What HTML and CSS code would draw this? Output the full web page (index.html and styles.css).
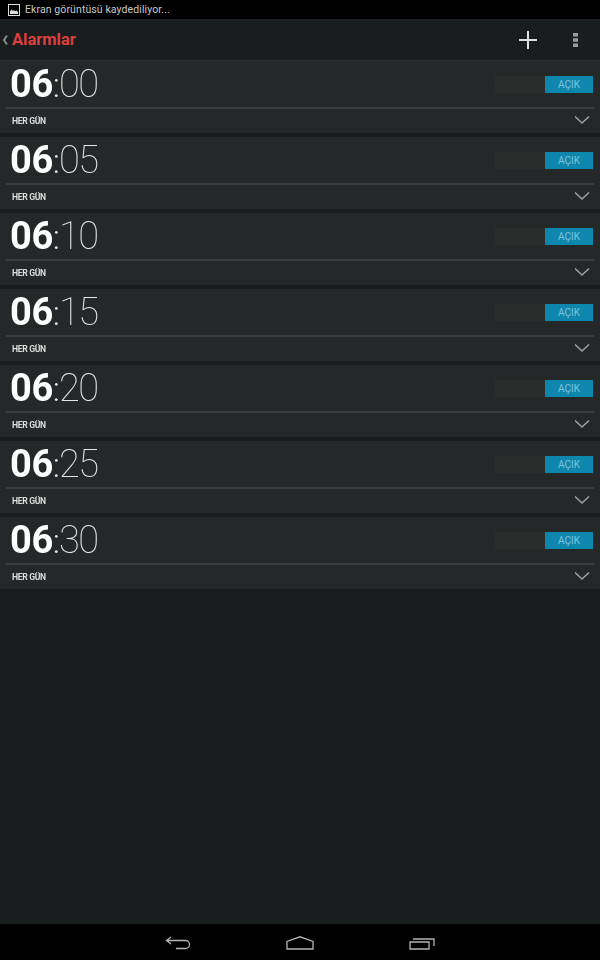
FILE: index.html
```html
<!DOCTYPE html>
<html lang="tr">
<head>
<meta charset="utf-8">
<title>Alarmlar</title>
<link rel="stylesheet" href="styles.css">
</head>
<body>
<div class="screen">
  <div class="status">
    <svg class="status-icon" width="12" height="12" viewBox="0 0 12 12"><rect x="0.5" y="0.5" width="11" height="11" fill="none" stroke="#ddd"/><path d="M2 10V7.500L3.500 5.500 5 7l1-1 1.200 1.200L8.500 6.500 10 8v2z" fill="#ddd"/></svg>
    <span class="status-text">Ekran görüntüsü kaydediliyor...</span>
  </div>
  <div class="actionbar">
    <svg class="back" width="6" height="12" viewBox="0 0 6 12"><path d="M5 1.500 2 6l3 4.500" fill="none" stroke="#8a8c8c" stroke-width="2"/></svg>
    <span class="title">Alarmlar</span>
    <svg class="add" width="20" height="20" viewBox="0 0 20 20"><path d="M10 1v18M1 10h18" stroke="#e0e0e0" stroke-width="2"/></svg>
    <svg class="more" width="5" height="16" viewBox="0 0 5 16"><path d="M0 1h5v3.500H0zM0 6.250h5v3.500H0zM0 11.500h5v3.500H0z" fill="#9c9c9c"/></svg>
  </div>
  <div class="list">
    <div class="card"><div class="top"><div class="time"><b>06</b><i>:</i><span>00</span></div><div class="toggle"><span class="on">AÇIK</span></div></div><div class="bottom"><span class="days">HER GÜN</span><svg class="chev" width="16" height="10" viewBox="0 0 16 10"><path d="M1 1.500 8 8l7-6.500" fill="none" stroke="#a0a0a0" stroke-width="1.600"/></svg></div></div>
    <div class="card"><div class="top"><div class="time"><b>06</b><i>:</i><span>05</span></div><div class="toggle"><span class="on">AÇIK</span></div></div><div class="bottom"><span class="days">HER GÜN</span><svg class="chev" width="16" height="10" viewBox="0 0 16 10"><path d="M1 1.500 8 8l7-6.500" fill="none" stroke="#a0a0a0" stroke-width="1.600"/></svg></div></div>
    <div class="card"><div class="top"><div class="time"><b>06</b><i>:</i><span>10</span></div><div class="toggle"><span class="on">AÇIK</span></div></div><div class="bottom"><span class="days">HER GÜN</span><svg class="chev" width="16" height="10" viewBox="0 0 16 10"><path d="M1 1.500 8 8l7-6.500" fill="none" stroke="#a0a0a0" stroke-width="1.600"/></svg></div></div>
    <div class="card"><div class="top"><div class="time"><b>06</b><i>:</i><span>15</span></div><div class="toggle"><span class="on">AÇIK</span></div></div><div class="bottom"><span class="days">HER GÜN</span><svg class="chev" width="16" height="10" viewBox="0 0 16 10"><path d="M1 1.500 8 8l7-6.500" fill="none" stroke="#a0a0a0" stroke-width="1.600"/></svg></div></div>
    <div class="card"><div class="top"><div class="time"><b>06</b><i>:</i><span>20</span></div><div class="toggle"><span class="on">AÇIK</span></div></div><div class="bottom"><span class="days">HER GÜN</span><svg class="chev" width="16" height="10" viewBox="0 0 16 10"><path d="M1 1.500 8 8l7-6.500" fill="none" stroke="#a0a0a0" stroke-width="1.600"/></svg></div></div>
    <div class="card"><div class="top"><div class="time"><b>06</b><i>:</i><span>25</span></div><div class="toggle"><span class="on">AÇIK</span></div></div><div class="bottom"><span class="days">HER GÜN</span><svg class="chev" width="16" height="10" viewBox="0 0 16 10"><path d="M1 1.500 8 8l7-6.500" fill="none" stroke="#a0a0a0" stroke-width="1.600"/></svg></div></div>
    <div class="card"><div class="top"><div class="time"><b>06</b><i>:</i><span>30</span></div><div class="toggle"><span class="on">AÇIK</span></div></div><div class="bottom"><span class="days">HER GÜN</span><svg class="chev" width="16" height="10" viewBox="0 0 16 10"><path d="M1 1.500 8 8l7-6.500" fill="none" stroke="#a0a0a0" stroke-width="1.600"/></svg></div></div>
  </div>
  <div class="navbar">
    <svg width="26" height="14" viewBox="0 0 26 14"><path d="M6 1 1.500 4.500 6 8M2 4.500h18.500a3.800 3.800 0 0 1 0 8H11" fill="none" stroke="#b4b4b4" stroke-width="1.300"/></svg>
    <svg width="28" height="14" viewBox="0 0 28 14"><path d="M1 13V5.500L14 .8l13 4.700V13z" fill="none" stroke="#b4b4b4" stroke-width="1.300"/></svg>
    <svg width="26" height="14" viewBox="0 0 26 14"><path d="M1 6h19v7H1zM4 3h21v7" fill="none" stroke="#b4b4b4" stroke-width="1.300"/></svg>
  </div>
</div>
</body>
</html>
```
FILE: styles.css
```css
* { box-sizing: border-box; }
html, body { margin: 0; padding: 0; background: #1a1d1d; }
.screen {
  width: 600px;
  height: 960px;
  display: flex;
  flex-direction: column;
  overflow: hidden;
  font-family: Roboto, "Liberation Sans", sans-serif;
  background: #1a1d1d;
}
.status {
  height: 19px;
  background: #000;
  display: flex;
  align-items: center;
  padding-left: 8px;
  gap: 5px;
}
.status-icon { flex: none; }
.status-text { font-size: 10.5px; color: #c8c8c8; letter-spacing: 0.1px; }
.actionbar {
  height: 41px;
  display: flex;
  align-items: center;
  padding-left: 2px;
  background: #1a1d1d;
}
.back { flex: none; margin-right: 4px; }
.title { font-size: 16.5px; font-weight: 700; color: #de3f3f; }
.add { margin-left: auto; margin-right: 35px; }
.more { margin-right: 22px; }
.list {
  flex: 1;
  display: flex;
  flex-direction: column;
  gap: 4px;
  border-top: 1px solid #2e3131;
}
.card { height: 72px; background: #252828; padding: 0 6px; }
.top {
  height: 48px;
  display: flex;
  justify-content: space-between;
  align-items: center;
  border-bottom: 2px solid #3a3d3d;
  padding: 0 1px 0 4px;
}
.time { font-size: 38px; line-height: 46px; color: #e6e6e6; will-change: opacity; }
.time b { font-weight: 700; color: #fff; letter-spacing: -0.4px; }
.time i { font-style: normal; font-weight: 300; font-size: 34px; margin-right: -1px; }
.time span { font-weight: 100; letter-spacing: -1.5px; }
.toggle {
  width: 98px;
  height: 17px;
  margin-top: 1px;
  background: #2b2d2d;
  display: flex;
  justify-content: flex-end;
}
.on {
  width: 48px;
  background: #0f86ad;
  color: #7fc3dc;
  font-size: 10px;
  line-height: 18px;
  text-align: center;
}
.bottom {
  height: 24px;
  display: flex;
  justify-content: space-between;
  align-items: center;
  padding: 0 4px 2px 6px;
}
.days { font-size: 8.6px; font-weight: 700; color: #dcdcdc; letter-spacing: -0.35px; margin-top: 2px; will-change: opacity; }
.chev { flex: none; }
.navbar {
  height: 36px;
  flex: none;
  background: #000;
  display: flex;
  justify-content: center;
  align-items: center;
  gap: 95px;
  padding-top: 2px;
}
```
